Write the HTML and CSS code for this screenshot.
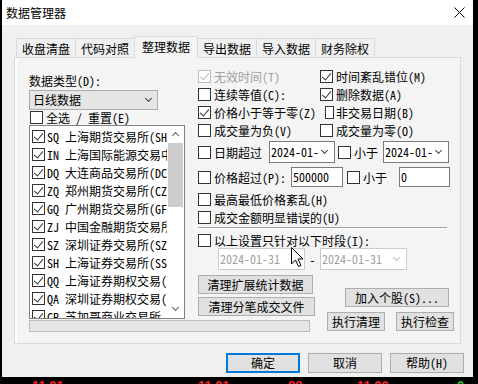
FILE: index.html
```html
<!DOCTYPE html>
<html lang="zh-CN">
<head>
    <meta charset="UTF-8">
    <meta name="viewport" content="width=device-width, initial-scale=1.0">
    <title>数据管理器</title>
    <link rel="stylesheet" href="styles.css">
</head>
<body>
    <div class="desk">
        <div class="dialog">
            <div class="titlebar">
                <span class="title">数据管理器</span>
                <svg class="close" width="11" height="11" viewBox="0 0 11 11">
                    <path d="M0.5 0.5L10.5 10.5M10.5 0.5L0.5 10.5" stroke="#000" stroke-width="1"/>
                </svg>
            </div>

            <div class="body">
                <div class="tabs">
                    <div class="tab">收盘清盘</div>
                    <div class="tab">代码对照</div>
                    <div class="tab active">整理数据</div>
                    <div class="tab">导出数据</div>
                    <div class="tab">导入数据</div>
                    <div class="tab">财务除权</div>
                </div>

                <div class="panel">
                    <div class="left">
                        <div class="label">数据类型(D):</div>
                        <div class="combo">日线数据<i class="chev"></i></div>
                        <div class="check-row"><span class="box"></span>全选 / 重置(E)</div>
                        <div class="list">
                            <div class="items">
                                <div class="item"><span class="box on"></span>SQ 上海期货交易所(SH</div>
                                <div class="item"><span class="box on"></span>IN 上海国际能源交易中</div>
                                <div class="item"><span class="box on"></span>DQ 大连商品交易所(DC</div>
                                <div class="item"><span class="box on"></span>ZQ 郑州期货交易所(CZ</div>
                                <div class="item"><span class="box on"></span>GQ 广州期货交易所(GF</div>
                                <div class="item"><span class="box on"></span>ZJ 中国金融期货交易所</div>
                                <div class="item"><span class="box on"></span>SZ 深圳证券交易所(SZ</div>
                                <div class="item"><span class="box on"></span>SH 上海证券交易所(SS</div>
                                <div class="item"><span class="box on"></span>QQ 上海证券期权交易(</div>
                                <div class="item"><span class="box on"></span>QA 深圳证券期权交易(</div>
                                <div class="item"><span class="box on"></span>CR 芝加哥商业交易所-</div>
                            </div>
                            <div class="scrollbar">
                                <div class="arrow up"></div>
                                <div class="track"><div class="thumb"></div></div>
                                <div class="arrow down"></div>
                            </div>
                        </div>
                        <div class="progress"></div>
                    </div>

                    <div class="right">
                        <div class="row">
                            <div class="cell disabled"><span class="box on"></span>无效时间(T)</div>
                            <div class="cell"><span class="box on"></span>时间紊乱错位(M)</div>
                        </div>
                        <div class="row">
                            <div class="cell"><span class="box"></span>连续等值(C):</div>
                            <div class="cell"><span class="box on"></span>删除数据(A)</div>
                        </div>
                        <div class="row">
                            <div class="cell"><span class="box on"></span>价格小于等于零(Z)</div>
                            <div class="cell"><span class="box narrow"></span>非交易日期(B)</div>
                        </div>
                        <div class="row">
                            <div class="cell"><span class="box"></span>成交量为负(V)</div>
                            <div class="cell"><span class="box"></span>成交量为零(O)</div>
                        </div>

                        <div class="row date-row">
                            <span class="box"></span>日期超过
                            <div class="date first">2024-01-<i class="chev"></i></div>
                            <span class="box"></span>小于
                            <div class="date second">2024-01-<i class="chev"></i></div>
                        </div>
                        <div class="row price-row">
                            <span class="box"></span>价格超过(P):
                            <div class="input first">500000</div>
                            <span class="box"></span>小于
                            <div class="input second">0</div>
                        </div>

                        <div class="row tight"><span class="box"></span>最高最低价格紊乱(H)</div>
                        <div class="row"><span class="box"></span>成交金额明显错误的(U)</div>
                        <div class="sep"></div>
                        <div class="row short"><span class="box"></span>以上设置只针对以下时段(I):</div>
                        <div class="range">
                            <div class="date off wide">2024-01-31<i class="chev"></i></div>
                            <span class="dash">-</span>
                            <div class="date off wide">2024-01-31<i class="chev"></i></div>
                        </div>

                        <div class="tools">
                            <div class="tool-col">
                                <button class="btn clean1">清理扩展统计数据</button>
                                <button class="btn clean2">清理分笔成交文件</button>
                            </div>
                            <div class="tool-side">
                                <button class="btn add">加入个股(S)...</button>
                                <div class="exec">
                                    <button class="btn small">执行清理</button>
                                    <button class="btn small">执行检查</button>
                                </div>
                            </div>
                        </div>
                    </div>
                </div>

                <div class="actions">
                    <button class="btn wide-btn default">确定</button>
                    <button class="btn wide-btn">取消</button>
                    <button class="btn wide-btn">帮助(H)</button>
                </div>
            </div>
        </div>

        <div class="ticker">
            <span class="red t1">11.01</span>
            <span class="red t2">11.01</span>
            <span class="red t3">88</span>
            <span class="red t4">11.00</span>
            <span class="green t5">0</span>
        </div>

        <svg class="cursor" width="13" height="21" viewBox="0 0 13 21">
            <path d="M0.5 0.5L0.5 17L4.5 13L7.5 19.5L10 18.5L7 12L12 12Z" fill="#fff" stroke="#000" stroke-width="1"/>
        </svg>
    </div>
</body>
</html>
```

FILE: styles.css
```css
* {
    box-sizing: border-box;
}
body {
    margin: 0;
    background-color: #000;
    font-family: "Noto Sans Mono CJK SC", "Noto Sans CJK SC", sans-serif;
    font-size: 12px;
    color: #000;
    overflow: hidden;
}
.desk {
    position: relative;
    width: 478px;
    height: 384px;
}
.dialog {
    margin-left: 2px;
    width: 471px;
    height: 377px;
    background-color: #f0f0f0;
}
.titlebar {
    height: 25px;
    background-color: #fff;
    display: flex;
    align-items: center;
    justify-content: space-between;
    padding: 0 8px 0 4px;
}
.title {
    font-family: "Noto Sans CJK SC", sans-serif;
    line-height: 16px;
}
.body {
    padding-left: 12px;
}
.tabs {
    display: flex;
    align-items: flex-end;
    height: 21px;
    margin-top: 11px;
    padding-left: 2px;
}
.tab {
    position: relative;
    width: 60px;
    height: 19px;
    margin-left: -1px;
    border: 1px solid #d9d9d9;
    border-bottom: none;
    background-color: #f0f0f0;
    text-align: center;
    line-height: 19px;
}
.tab:first-child {
    margin-left: 0;
}
.tab.active {
    z-index: 1;
    width: 64px;
    height: 22px;
    margin-bottom: -1px;
    line-height: 20px;
    background-color: #f4f4f4;
}
.panel {
    display: grid;
    grid-template-columns: 169px 1fr;
    width: 447px;
    height: 287px;
    padding: 9px 0 0 14px;
    border: 1px solid #d9d9d9;
    background-color: #f4f4f4;
    box-shadow: inset 2px 0 #fff;
}

/* left column */
.left {
    padding-top: 5px;
}
.label {
    height: 18px;
    line-height: 18px;
}
.combo {
    position: relative;
    width: 129px;
    height: 20px;
    padding-left: 3px;
    border: 1px solid #adadad;
    background-color: #e5e5e5;
    line-height: 18px;
}
.chev {
    position: absolute;
    right: 6px;
    top: 5px;
    width: 5px;
    height: 5px;
    border: solid #444;
    border-width: 0 1px 1px 0;
    transform: rotate(45deg);
}
.check-row {
    display: flex;
    align-items: center;
    height: 15px;
    padding-left: 1px;
}
.box {
    position: relative;
    flex: none;
    width: 13px;
    height: 13px;
    margin-right: 3px;
    border: 1px solid #333;
    background-color: #fff;
}
.box.on::after {
    content: "";
    position: absolute;
    left: 3px;
    top: 0;
    width: 4px;
    height: 8px;
    border: solid #333;
    border-width: 0 1px 1px 0;
    transform: rotate(40deg);
}
.list {
    display: flex;
    width: 156px;
    height: 194px;
    border: 1px solid #828282;
    background-color: #fff;
}
.items {
    flex: 1;
    overflow: hidden;
    padding: 1px 0 0 2px;
}
.item {
    display: flex;
    align-items: center;
    height: 18px;
    white-space: nowrap;
}
.item .box {
    margin-right: 2px;
}
.scrollbar {
    display: flex;
    flex-direction: column;
    width: 17px;
}
.arrow {
    position: relative;
    height: 17px;
}
.arrow::after {
    content: "";
    position: absolute;
    left: 6px;
    width: 4px;
    height: 4px;
    border: solid #606060;
    border-width: 1.5px 0 0 1.5px;
}
.arrow.up::after {
    top: 7px;
    transform: rotate(45deg);
}
.arrow.down::after {
    top: 4px;
    transform: rotate(225deg);
}
.track {
    flex: 1;
}
.thumb {
    height: 64px;
    margin: 0 1px;
    background-color: #cdcdcd;
}
.progress {
    width: 281px;
    height: 12px;
    margin-top: 1px;
    border: 1px solid #bcbcbc;
    background-color: #e6e6e6;
}

/* right column */
.right {
    display: flex;
    flex-direction: column;
}
.row {
    display: flex;
    align-items: center;
    height: 18px;
    white-space: nowrap;
}
.cell {
    display: flex;
    align-items: center;
    width: 122px;
}
.cell.disabled {
    color: #a0a0a0;
}
.cell.disabled .box {
    border-color: #bcbcbc;
}
.cell.disabled .box::after {
    border-color: #bcbcbc;
}
.box.narrow {
    width: 9px;
    margin-left: 5px;
    margin-right: 2px;
}
.date-row {
    height: 22px;
    margin-top: 2px;
}
.price-row {
    height: 20px;
    margin-top: 4px;
}
.date,
.input {
    position: relative;
    height: 22px;
    padding-left: 1px;
    border: 1px solid #7a7a7a;
    background-color: #fff;
    line-height: 20px;
}
.date .chev {
    right: 7px;
    top: 6px;
}
.date.first {
    width: 66px;
    margin: 0 3px 0 7px;
}
.date.second {
    width: 66px;
    margin-left: 5px;
}
.input {
    height: 20px;
    line-height: 18px;
}
.input.first {
    width: 52px;
    margin: 0 4px 0 5px;
}
.input.second {
    width: 51px;
    margin-left: 12px;
}
.tight {
    margin-top: 3px;
}
.sep {
    width: 249px;
    height: 2px;
    margin-top: 1px;
    border-top: 1px solid #a0a0a0;
    border-bottom: 1px solid #fff;
}
.short {
    height: 16px;
    margin-top: 3px;
}
.range {
    display: flex;
    align-items: center;
    height: 22px;
    padding-left: 20px;
}
.date.off {
    border-color: #cccccc;
    color: #a0a0a0;
}
.date.off .chev {
    border-color: #c0c0c0;
}
.date.wide {
    width: 87px;
}
.dash {
    width: 15px;
    text-align: center;
}
.tools {
    display: flex;
    margin-top: 5px;
}
.tool-col {
    display: flex;
    flex-direction: column;
    align-items: flex-start;
}
.btn {
    height: 19px;
    padding: 0;
    border: 1px solid #adadad;
    background-color: #e1e1e1;
    font-family: inherit;
    font-size: 12px;
    line-height: 17px;
    color: #000;
}
.clean1 {
    width: 115px;
}
.clean2 {
    width: 117px;
    margin-top: 3px;
}
.tool-side {
    margin-left: 12px;
}
.add {
    width: 104px;
    margin: 13px 0 0 18px;
}
.exec {
    display: flex;
    gap: 11px;
    margin-top: 5px;
}
.small {
    width: 58px;
}
.actions {
    display: flex;
    justify-content: flex-end;
    gap: 8px;
    margin-top: 9px;
    padding-right: 9px;
}
.wide-btn {
    width: 74px;
    height: 20px;
    line-height: 18px;
}
.default {
    border: 2px solid #0078d7;
    line-height: 16px;
}

/* background behind the window */
.ticker {
    position: relative;
    height: 7px;
    overflow: hidden;
    font-family: "Liberation Sans", sans-serif;
    font-size: 13px;
    font-weight: bold;
    line-height: 13px;
}
.ticker span {
    position: absolute;
    top: 2px;
}
.red {
    color: #ff2020;
}
.green {
    color: #20c020;
}
.t1 { left: 32px; }
.t2 { left: 198px; }
.t3 { left: 288px; }
.t4 { left: 357px; }
.t5 { left: 457px; }
.cursor {
    position: absolute;
    left: 291px;
    top: 247px;
}
```
